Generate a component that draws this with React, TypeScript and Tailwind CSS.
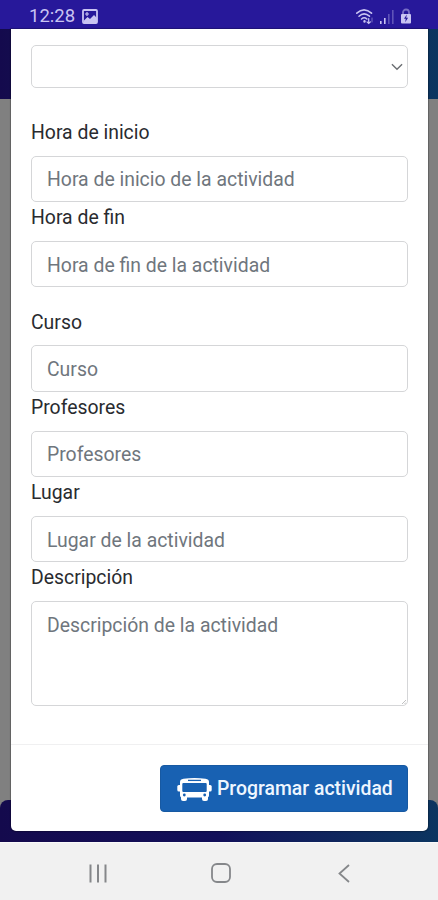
import type { ReactNode } from "react";

function StatusBar() {
  return (
    <header className="flex h-[29px] shrink-0 items-center justify-between bg-[#27189a] pr-[26px] pl-[29px] pt-[3px] text-[#c9c4f2]">
      <div className="flex items-center gap-[7px]">
        <span className="w-[46px] text-[18.5px] leading-none whitespace-nowrap">12:28</span>
        <svg width="16" height="15" viewBox="0 0 16 15">
          <rect x="1" y="1" width="14" height="13" rx="1" fill="none" stroke="currentColor" strokeWidth="1.8" />
          <path d="M2 11.5 5.5 8 8 10l4-4 3 3v5H2z" fill="currentColor" />
          <path d="M5 3v4M3 5h4" stroke="currentColor" strokeWidth="1.2" />
        </svg>
      </div>
      <div className="flex items-center">
        <svg width="20" height="17" viewBox="0 0 20 17" fill="none" stroke="currentColor" strokeLinecap="round">
          <path d="M.8 5.2Q8 -1.6 15.5 5.2" strokeWidth="1.6" />
          <path d="M3 8.2q5-4.6 10.500 0" strokeWidth="1.5" />
          <path d="M5.5 11q2.7-2.4 5.4 0" strokeWidth="1.5" />
          <path d="M8.5 13.2v.3" strokeWidth="2.4" />
          <path d="M12.7 10.5v5m-1.7-1.7 1.7 1.7 1.7-1.7" strokeWidth="1.2" />
          <path d="M16 14v-4" strokeWidth="1" opacity=".5" />
        </svg>
        <svg className="ml-1" width="14" height="15" viewBox="0 0 14 15" fill="currentColor">
          <path d="M0 12h1.6v3H0zM4 9h1.6v6H4z" />
          <path d="M8 5h1.6v10H8zM12 1h1.6v14H12z" opacity=".35" />
        </svg>
        <svg className="ml-1.5" width="12" height="16" viewBox="0 0 12 16">
          <path d="M3 7V4.5a3 3 0 0 1 6 0V7" fill="none" stroke="currentColor" strokeWidth="1.8" opacity=".5" />
          <rect x="1" y="6" width="10" height="9.5" rx="1" fill="currentColor" />
          <path d="M6.8 6.5 4 10.8h1.8l-.6 3.4 2.9-4.5H6.200z" fill="#27189a" />
        </svg>
      </div>
    </header>
  );
}

function BusIcon() {
  return (
    <svg className="mt-px" width="35" height="25" viewBox="0 0 35 25" fill="none">
      <path
        d="M3 5Q3 2.3 6.5 1.8 17.5.2 28.5 1.8 32 2.3 32 5v13.5q0 2-2 2H5q-2 0-2-2z"
        fill="white"
      />
      <rect x=".3" y="8" width="4" height="6.5" rx="1.5" fill="white" />
      <rect x="30.7" y="8" width="4" height="6.5" rx="1.5" fill="white" />
      <rect x="4" y="16" width="6" height="8" rx="2" fill="white" />
      <rect x="25" y="16" width="6" height="8" rx="2" fill="white" />
      <rect x="5.3" y="6" width="24.4" height="9" rx="1" fill="#1861b2" />
      <path d="M11 3.4h13" stroke="#1861b2" strokeWidth="1.3" />
      <circle cx="7.3" cy="18" r="1.4" fill="#1861b2" />
      <circle cx="27.7" cy="18" r="1.4" fill="#1861b2" />
    </svg>
  );
}

function Label({ children }: { children: ReactNode }) {
  return (
    <label className="flex h-[38.7px] items-start pt-[3px] text-[19.4px] leading-[26px] text-[#292b2f]">
      {children}
    </label>
  );
}

const control =
  "block w-full rounded-[5px] border border-[#d5d6d8] bg-white px-[15px] text-[19.4px] text-[#6f767d] placeholder:text-[#6f767d] placeholder:opacity-100 outline-none";

function Field({ label, placeholder }: { label: string; placeholder: string }) {
  return (
    <div className="h-[85.2px]">
      <Label>{label}</Label>
      <input className={`${control} h-[46.5px] pt-[2px]`} placeholder={placeholder} />
    </div>
  );
}

function ActivityModal() {
  return (
    <div className="absolute top-[29px] left-[11px] flex h-[802px] w-[417px] flex-col rounded-b-[5px] bg-white shadow-[0_0_1px_1px_rgba(0,0,0,0.25)]">
      <div className="h-[715px] px-5 pt-4">
        <div className={`${control} flex h-[43px] items-center justify-end pr-[4px]!`}>
          <svg width="12" height="8" viewBox="0 0 13 8" fill="none" stroke="#6b6e72" strokeWidth="1.5">
            <path d="m1 1 5.5 5.5L12 1" />
          </svg>
        </div>
        <div className="mt-[29px]">
          <Field label="Hora de inicio" placeholder="Hora de inicio de la actividad" />
          <Field label="Hora de fin" placeholder="Hora de fin de la actividad" />
        </div>
        <div className="mt-[19.4px]">
          <Field label="Curso" placeholder="Curso" />
          <Field label="Profesores" placeholder="Profesores" />
          <Field label="Lugar" placeholder="Lugar de la actividad" />
          <Label>Descripción</Label>
          <div className="relative">
            <textarea
              className={`${control} h-[105px] resize-none pt-[9.5px] leading-[28px]`}
              placeholder="Descripción de la actividad"
            />
            <svg className="absolute right-[2px] bottom-[2px]" width="4" height="4" viewBox="0 0 4 4">
              <path d="M0 4 4 0M2.5 4 4 2.5" stroke="#b0b1b3" strokeWidth=".8" />
            </svg>
          </div>
        </div>
      </div>
      <div className="flex flex-1 justify-end border-t border-[#f0f0f1] px-5 pt-5">
        <button className="flex h-[47px] w-[248px] items-center rounded-[4px] border border-[#1759a2] bg-[#1861b2] pt-px pl-4 text-[19.4px] font-medium text-[#eef6ff]">
          <BusIcon />
          <span className="ml-[5px] whitespace-nowrap">Programar actividad</span>
        </button>
      </div>
    </div>
  );
}

function NavigationBar() {
  return (
    <nav className="flex h-[58px] items-center justify-between border-t border-[#fafafa] bg-[#f1f1f1] pt-1 pr-[88px] pl-[89px] text-[#85878a]">
      <svg width="18" height="19" viewBox="0 0 18 19" stroke="currentColor" strokeWidth="2">
        <path d="M1.5.5v18M9 .5v18M16.5.5v18" />
      </svg>
      <svg className="-mt-[2px] mr-1" width="20" height="20" viewBox="0 0 20 20" fill="none" stroke="currentColor" strokeWidth="1.8">
        <rect x="1" y="1" width="18" height="18" rx="5" />
      </svg>
      <svg className="-mt-px" width="12" height="19" viewBox="0 0 12 19" fill="none" stroke="currentColor" strokeWidth="1.8">
        <path d="M11 1 1.5 9.5 11 18" />
      </svg>
    </nav>
  );
}

export default function App() {
  return (
    <div className="relative flex h-[900px] w-[438px] flex-col overflow-hidden bg-[#808080] font-['Roboto',sans-serif]">
      <StatusBar />
      <div className="h-[70px] bg-linear-to-r from-[#140a4d] to-[#0b3560]" />
      <main className="flex-1" />
      <div className="h-[42px] rounded-t-[8px] bg-linear-to-r from-[#140a4d] via-[#12105a] to-[#0b3560]" />
      <NavigationBar />
      <ActivityModal />
    </div>
  );
}
